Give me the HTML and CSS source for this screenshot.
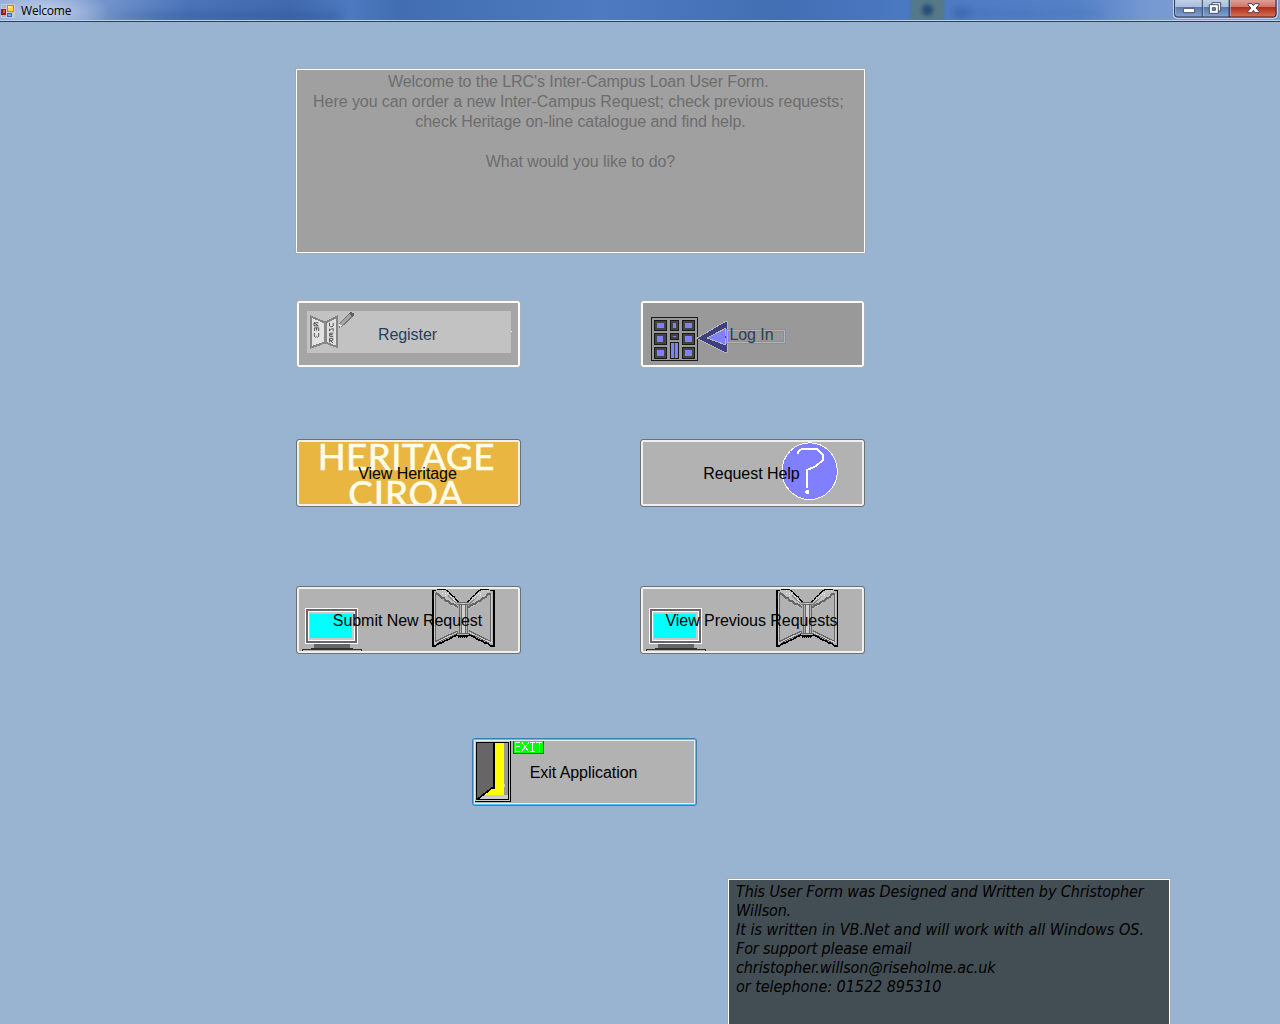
FILE: index.html
```html
<!DOCTYPE html>
<html lang="en">
<head>
<meta charset="utf-8">
<title>Welcome</title>
<link rel="stylesheet" href="styles.css">
</head>
<body>
<svg width="0" height="0" class="defs" aria-hidden="true">
  <defs>
    <linearGradient id="glass" x1="0" y1="0" x2="0" y2="1"><stop offset="0" stop-color="#c4d2e8"/><stop offset=".45" stop-color="#a9bddb"/><stop offset=".46" stop-color="#5878ad"/><stop offset="1" stop-color="#85a3d3"/></linearGradient>
    <linearGradient id="red" x1="0" y1="0" x2="0" y2="1"><stop offset="0" stop-color="#dfa59b"/><stop offset=".45" stop-color="#ce7466"/><stop offset=".46" stop-color="#b12c17"/><stop offset="1" stop-color="#d5735a"/></linearGradient>
    <g id="computer">
      <path fill="#fff" d="M45 84h159v108H45z"/><path fill="#666" d="M48 87h153v102H48z"/><path fill="#fff" d="M54 93h141v90H54z"/><path fill="#c9c9c9" d="M57 96h135v84H57z"/><path fill="#0ff" d="M60 102h126v72H60z"/>
      <path fill="#666" d="M72 192h108v12H72z"/><path fill="#333" d="M63 204h126v3H63zM36 207h180v3H36zM36 207h3v6h-3zM213 207h3v6h-3z"/>
    </g>
    <g id="page" fill="none">
      <path fill="#b2b2b2" d="M14 16h10l66 42v92l-74 32z"/>
      <path fill="#c0c0c0" d="M21 15l5-3h28l38 38v22l-12-3-30-22z"/>
      <path stroke="#eee" stroke-width="3" stroke-dasharray="3 9" d="M32 17l52 36M42 16l40 34M50 17l32 30"/>
      <path stroke="#666" stroke-width="6" d="M24 25l8 3 6 9 9 2 6 8 10 3 7 7 10 2 10 8"/>
      <path stroke="#888" stroke-width="3" d="M60 32l30 28"/>
      <path stroke="#666" stroke-width="4" d="M23 23v146l65-31M29 172l61-28"/>
      <path stroke="#ccc" stroke-width="3" d="M20 24v150l68-32"/>
      <path stroke="#000" stroke-width="4" d="M27 13h27M54 15l9 6 7 9 9 6 6 9 8 7"/>
      <path stroke="#000" stroke-width="5" d="M25 16H14v166h9l8-6 11-3 9-6 12-4 10-7 15-6"/>
    </g>
    <g id="book" transform="translate(414 15)">
      <use href="#page"/><use href="#page" transform="matrix(-1 0 0 1 211 0)"/>
      <path fill="#b2b2b2" d="M90 51h31v100H90z"/>
      <path fill="#d0d0d0" d="M99 54h12v92H99z"/>
      <path fill="none" stroke="#666" stroke-width="3" d="M87 51h36M90 57h30M93 57v89M99 61v84M111 61v84M117 57v89M88 145h34"/>
      <path fill="none" stroke="#000" stroke-width="3" d="M84 150h41M90 154h30"/><path fill="none" stroke="#000" stroke-width="6" stroke-dasharray="3 3" d="M91 157h28"/>
    </g>
  </defs>
</svg>

<header class="titlebar">
  <svg class="app-icon" width="14" height="15" viewBox="3 11 42 45" shape-rendering="crispEdges">
    <path fill="#c9cbd0" d="M3 12h42v42H3z"/><path fill="#a7b5cf" d="M6 15h12v9H6zM6 45h12v6H6z"/>
    <path fill="#b98a1c" d="M21 14h21v22H21z"/><path fill="#ffd344" d="M24 17h15v16H24z"/><path fill="#fff0a0" d="M24 17h9v6h-9z"/>
    <path fill="#9b1c16" d="M4 26h15v17H4z"/><path fill="#e2523c" d="M8 30h7v8H8z"/>
    <path fill="#3468c4" d="M21 39h16v12H21z"/><path fill="#78a8ef" d="M24 41h9v6h-9z"/>
  </svg>
  <h1 class="title">Welcome</h1>
  <div class="backdrop">
    <span class="smudge smudge-text"></span>
    <span class="smudge smudge-green"></span>
    <span class="smudge smudge-right"></span>
  </div>
  <svg class="controls" width="105" height="19" viewBox="879 0 315 57">
    <path fill="none" stroke="#cddaf0" stroke-width="3" d="M880 0v44q0 11 11 11h290q11 0 11-11V0"/>
    <path fill="url(#glass)" stroke="#26344f" stroke-width="3" d="M884 -3v46q0 8 8 8h156V-3z"/>
    <path fill="url(#red)" stroke="#481a1a" stroke-width="3" d="M1048 -3v54h132q8 0 8-8V-3z"/>
    <path stroke="#2d3e60" stroke-width="3" d="M967 0v50"/><path stroke="#b8c9e4" stroke-width="2" d="M970 0v48M1051 0v48M887 0v43"/>
    <rect x="910" y="25" width="34" height="13" rx="2" fill="#fff" stroke="#44516b" stroke-width="3"/>
    <path fill="#fff" stroke="#44516b" stroke-width="3" d="M996 8h26v25h-26z"/><path fill="#fff" stroke="#44516b" stroke-width="3" d="M988 14h27v26h-27z"/><path fill="#7d95bd" stroke="#44516b" stroke-width="3" d="M997 23h9v8h-9z"/>
    <path fill="#fff" stroke="#54424f" stroke-width="3" stroke-linejoin="round" d="M1104 11h12l4 6 5-6h12v4l-9 9 9 10v4h-12l-5-7-4 7h-12v-4l9-10-9-9z"/>
  </svg>
</header>

<main class="form">
  <section class="intro">
    <p>Welcome to the LRC's Inter-Campus Loan User Form.&nbsp;</p>
    <p>Here you can order a new Inter-Campus Request; check previous requests;&nbsp;</p>
    <p>check Heritage on-line catalogue and find help.</p>
    <p>&nbsp;</p>
    <p>What would you like to do?</p>
  </section>

  <div class="actions">
    <button class="btn btn-off btn-register" disabled>
      <svg class="art" viewBox="18 12 675 204" shape-rendering="crispEdges">
        <path fill="#c2c2c2" d="M51 45h612v126H51z"/>
        <path fill="#e2e2e2" stroke="#858585" stroke-width="6" d="M64 62l37 16h8l33-16v91l-33-12h-8l-37 13z"/><path stroke="#888" stroke-width="4" d="M103 77v66M108 77v66"/>
        <g fill="none" stroke="#555" stroke-width="3" shape-rendering="auto"><path d="M72 89.500V80.500M85 80.500H72l13 9H72M73.500 105v-9.500H86V105M79.500 96v8M73 111v10l3 3 3.500-3 3.500 3 3-3v-10"/><path d="M118.500 80v10l3 2h5l3-2V80M130 98.500h-5l-7 6M118.500 98v7M129.500 98v8M130 111.500h-11V121h11M119 116h9M118.500 139v-12h10v6h-9l10 8"/></g>
        <path fill="#a5a5a5" stroke="#777" stroke-width="3" d="M149 82l30-30 10 6-29 29-11 7z"/><path fill="#606060" d="M176 52l6-5 10 6v5l-6 5z"/><path fill="#eee" d="M148 85l10 3-9 6zM663 105h3v3h-3z"/>
      </svg>
      <span class="label">Register</span>
    </button>
    <button class="btn btn-off btn-login" disabled>
      <svg class="art" viewBox="18 12 675 204" shape-rendering="crispEdges">
        <path fill="none" stroke="#1a1a1a" stroke-width="3" d="M52.500 64.500h138v129h-138z"/>
        <g fill="#444" stroke="#1a1a1a" stroke-width="3"><path d="M61.500 73.500h36v30h-36zM109.500 73.500h24v30h-24zM145.500 73.500h36v30h-36zM61.500 112.500h36v33h-36zM109.500 112.500h24v18h-24zM145.500 112.500h36v33h-36zM61.500 154.500h36v33h-36zM145.500 154.500h36v33h-36zM109.500 139.500h24v48h-24z"/></g>
        <path fill="#8080ff" d="M69 81h21v15H69zM117 81h9v15h-9zM153 81h21v15h-21zM69 120h18v18H69zM117 120h9v3h-9zM153 120h21v18h-21zM69 162h21v18H69zM153 162h21v18h-21zM111 141h9v45h-9zM123 141h9v45h-9z"/>
        <path fill="#404080" stroke="#b5b5b5" stroke-width="3" d="M188 127l85-50h6v92h-6z"/><path fill="#8080ff" stroke="#b5b5b5" stroke-width="3" d="M219 126l54-28v48z"/><path fill="#404080" d="M276 78h3v90h-3zM273 120h4v6h-4z"/>
        <path fill="none" stroke="#b5b5b5" stroke-width="3" d="M280.500 103.500h171v36h-171z"/><path fill="none" stroke="#8080ff" stroke-width="3" d="M277.500 100.500h177v42h-177zM283.500 106.500h165v30h-165z"/>
      </svg>
      <span class="label">Log In</span>
    </button>
    <button class="btn btn-heritage">
      <svg class="art" viewBox="18 15 675 204">
        <path fill="#e8b641" d="M27 24h657v186H27z"/>
        <svg x="27" y="24" width="657" height="186" viewBox="27 24 657 186">
          <g class="logo"><text x="83" y="109" textLength="530">HERITAGE</text><text x="175" y="218" textLength="344">CIRQA</text></g>
        </svg>
      </svg>
      <span class="label">View Heritage</span>
    </button>
    <button class="btn">
      <svg class="art" viewBox="18 15 675 204" shape-rendering="crispEdges">
        <ellipse cx="527" cy="111.500" rx="83" ry="85" fill="#8080ff" stroke="#fff" stroke-width="3"/>
        <path fill="none" stroke="#fff" stroke-width="6" d="M491 59l3-7 9-7h45l18 18v16l-21 18-26 11v54"/><path fill="#fff" d="M516 168h6l3 3v6l-3 3h-6l-3-3v-6z"/>
      </svg>
      <span class="label">Request Help</span>
    </button>
    <button class="btn">
      <svg class="art" viewBox="18 18 675 204" shape-rendering="crispEdges"><use href="#computer"/><use href="#book"/></svg>
      <span class="label">Submit New Request</span>
    </button>
    <button class="btn">
      <svg class="art" viewBox="18 18 675 204" shape-rendering="crispEdges"><use href="#computer"/><use href="#book"/></svg>
      <span class="label">View Previous Requests</span>
    </button>
  </div>

  <button class="btn btn-exit">
    <svg class="art" viewBox="18 18 675 204" shape-rendering="crispEdges">
      <path fill="#000" d="M27 207h108v3H27zM132 27h3v183h-3z"/><path fill="#ccc" d="M27 27h105v180H27z"/><path fill="#000" d="M30 30h99v174H30z"/><path fill="#999" d="M33 33h93v168H33z"/><path fill="#ccc" d="M51 189h75v12H33v-3zM114 156h3v9h-3z"/>
      <path fill="#ff0" d="M87 33h27v156H51l36-24z"/><path fill="#666" d="M33 33h48v135l-48 33z"/><path fill="none" stroke="#000" stroke-width="5" d="M84 33v135h-6L34 202"/>
      <path fill="#008000" d="M141 27h93v39h-93z"/><path fill="#0f0" d="M144 27h87v36h-87z"/>
      <path fill="none" stroke="#fff" stroke-width="3" d="M162 31.500h-13.500v27H162M149 43.500h12M168 31l20 28M189 31l-23 28M193 31.500h15M200.500 31v28M193 58.500h15M210 31.500h18M219.500 31v29"/>
    </svg>
    <span class="label">Exit Application</span>
  </button>

  <footer class="credits">
    <p class="c1">This User Form was Designed and Written by Christopher</p>
    <p class="c2">Willson.</p>
    <p class="c3">It is written in VB.Net and will work with all Windows OS.</p>
    <p class="c4">For support please email</p>
    <p class="c5">christopher.willson@riseholme.ac.uk</p>
    <p class="c6">or telephone: 01522 895310</p>
  </footer>
</main>
</body>
</html>
```

FILE: styles.css
```css
* { box-sizing: border-box; }
html, body { height: 100%; }
body {
  margin: 0;
  display: flex;
  flex-direction: column;
  overflow: hidden;
  background: #99b4d1;
  font-family: "Liberation Sans", Arial, sans-serif;
  font-size: 16px;
}
p, h1 { margin: 0; }
.defs { position: absolute; }

.titlebar {
  flex: none;
  display: flex;
  align-items: flex-start;
  height: 22px;
  padding: 0 2px 0 1px;
  border-bottom: 1px solid #263f68;
  box-shadow: inset 0 -1px 0 #bfd0ea;
  background:
    radial-gradient(ellipse 65px 24px at 45px 12px, #d4def0cc, #d4def000),
    linear-gradient(90deg, #8ba7d6 0, #7595cc 100px, #4a73b8 190px, #4069ae 290px, #4c79bf 350px, #426db2 400px, #4d7ac0 600px, #426eb4 780px, #4a78c1 900px, #5582c7 1080px, #7799d1 1150px, #7f9fd4 1280px);
}
.app-icon { margin-top: 4px; }
.title {
  margin-left: 6px;
  font: 400 12px/22px "Open Sans", sans-serif;
  letter-spacing: -0.2px;
}
.backdrop {
  flex: 1;
  display: flex;
  height: 20px;
  overflow: hidden;
}
.smudge { filter: blur(3px); height: 10px; margin-top: 11px; }
.smudge-text { width: 245px; margin-left: 25px; background: linear-gradient(90deg, #2e559500, #2e559550 60px); }
.smudge-green { width: 33px; height: 24px; margin: -2px 0 0 570px; background: radial-gradient(circle at 50% 50%, #264e77 0 3px, #557987 8px); filter: blur(1.500px); }
.smudge-right { width: 150px; margin: 8px 0 0 10px; background: linear-gradient(90deg, #315a9f90 0 10px, #416eb750 20px, #416eb730); }
.controls { flex: none; }

.form {
  flex: 1;
  display: flex;
  flex-direction: column;
  align-items: flex-start;
  padding: 47px 110px 0 296px;
}
.intro {
  flex: none;
  width: 569px;
  height: 184px;
  padding-top: 2px;
  border: 1px solid #fff;
  box-shadow: 0 0 0 1px #a2acb8;
  background: #a0a0a0;
  color: #6d6d6d;
  line-height: 20px;
  letter-spacing: -0.07px;
  text-align: center;
  white-space: nowrap;
}
.actions {
  display: grid;
  grid-template-columns: 225px 225px;
  grid-template-rows: 139px 147px 68px;
  column-gap: 119px;
  align-items: start;
  margin-top: 47px;
}
.btn {
  position: relative;
  display: flex;
  align-items: center;
  justify-content: center;
  width: 225px;
  height: 68px;
  padding: 2px 2px 0 0;
  border: 1px solid #707070;
  border-radius: 3px;
  box-shadow: inset 0 0 0 2px #efefef;
  background: #b2b2b2;
  color: #000;
  font: inherit;
  letter-spacing: -0.05px;
  white-space: nowrap;
}
.btn-off {
  border-color: #adb2b5;
  box-shadow: inset 0 0 0 2px #fafafa;
  color: #273f5d;
}
.btn-register { background: #a5a5a5; }
.btn-login { background: #999; }
.btn-exit {
  flex: none;
  margin: 84px 0 0 176px;
  border-color: #3c7fb1;
  box-shadow: inset 0 0 0 1px #46c6f3, inset 0 0 0 2px #e5eef2;
}
.art {
  position: absolute;
  left: -1px;
  top: -1px;
  width: 225px;
  height: 68px;
}
.label { position: relative; line-height: 20px; }
.logo {
  font: 400 110px Lato, sans-serif;
  fill: #fffde9;
  stroke: #fffde9;
  stroke-width: 1.8px;
  stroke-linejoin: round;
}

.credits {
  flex: none;
  align-self: flex-end;
  width: 442px;
  height: 160px;
  margin-top: 73px;
  padding: 2px 0 0 7px;
  border: 1px solid #fff;
  box-shadow: 0 0 0 1px #a2acb8;
  background: #434e54;
  font: italic 16px/19px "DejaVu Sans Condensed", "DejaVu Sans", sans-serif;
  font-stretch: condensed;
  white-space: nowrap;
}
.c1 { letter-spacing: -0.11px; }
.c2 { letter-spacing: -0.15px; }
.c3 { letter-spacing: 0; }
.c4 { letter-spacing: -0.15px; }
.c5 { letter-spacing: -0.1px; }
.c6 { letter-spacing: -0.04px; }
```
